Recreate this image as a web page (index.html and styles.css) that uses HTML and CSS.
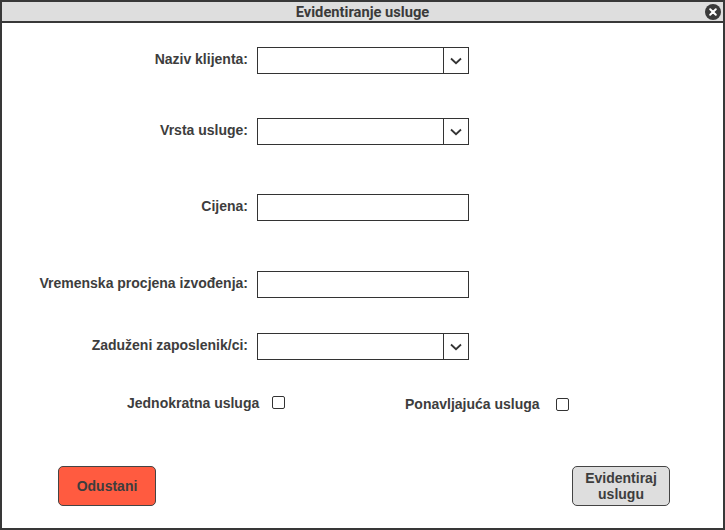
FILE: index.html
```html
<!DOCTYPE html>
<html>
<head>
<meta charset="utf-8">
<link rel="stylesheet" href="styles.css">
</head>
<body>
<div class="window">
  <div class="titlebar">
    <span class="title">Evidentiranje usluge</span>
    <span class="close"><svg width="16" height="16" viewBox="0 0 16 16"><circle cx="8" cy="8" r="8" fill="#3a3a3a"/><path d="M5.2 5.2 L10.8 10.8 M10.8 5.2 L5.2 10.8" stroke="#fff" stroke-width="2" stroke-linecap="round"/></svg></span>
  </div>
  <div class="content">
    <div class="row r1">
      <label class="lbl">Naziv klijenta:</label>
      <div class="field select"><span class="arrow"><svg width="12" height="8" viewBox="0 0 12 8"><path d="M1 1.5 L6 6.2 L11 1.5" fill="none" stroke="#333" stroke-width="1.8"/></svg></span></div>
    </div>
    <div class="row r2">
      <label class="lbl">Vrsta usluge:</label>
      <div class="field select"><span class="arrow"><svg width="12" height="8" viewBox="0 0 12 8"><path d="M1 1.5 L6 6.2 L11 1.5" fill="none" stroke="#333" stroke-width="1.8"/></svg></span></div>
    </div>
    <div class="row r3">
      <label class="lbl">Cijena:</label>
      <div class="field"></div>
    </div>
    <div class="row r4">
      <label class="lbl">Vremenska procjena izvođenja:</label>
      <div class="field"></div>
    </div>
    <div class="row r5">
      <label class="lbl">Zaduženi zaposlenik/ci:</label>
      <div class="field select"><span class="arrow"><svg width="12" height="8" viewBox="0 0 12 8"><path d="M1 1.5 L6 6.2 L11 1.5" fill="none" stroke="#333" stroke-width="1.8"/></svg></span></div>
    </div>
    <div class="checks">
      <div class="check c1"><span>Jednokratna usluga</span><span class="box"></span></div>
      <div class="check c2"><span>Ponavljajuća usluga</span><span class="box"></span></div>
    </div>
    <div class="buttons">
      <button class="btn cancel">Odustani</button>
      <button class="btn submit">Evidentiraj<br>uslugu</button>
    </div>
  </div>
</div>
</body>
</html>
```

FILE: styles.css
```css
* { box-sizing: border-box; }
html, body { margin: 0; padding: 0; background: #fff; }
body { font-family: "Liberation Sans", Arial, sans-serif; color: #3d3d3d; }
.window {
  width: 725px;
  height: 530px;
  border: 2px solid #383838;
  display: flex;
  flex-direction: column;
}
.titlebar {
  height: 21px;
  background: #dedede;
  border-bottom: 2px solid #383838;
  display: flex;
  align-items: center;
  justify-content: center;
  position: relative;
}
.title {
  font-family: Roboto, "Liberation Sans", sans-serif;
  font-weight: bold;
  font-size: 14.7px;
  color: #3a3a3a;
}
.close {
  position: absolute;
  right: 2px;
  top: 2px;
  width: 16px;
  height: 16px;
  display: block;
}
.close svg { display: block; }
.content { flex: 1; display: flex; flex-direction: column; }
.row {
  display: grid;
  grid-template-columns: 248px 212px;
  column-gap: 7px;
  align-items: center;
}
.r1 { margin-top: 24px; }
.r2 { margin-top: 44px; }
.r3 { margin-top: 49px; }
.r4 { margin-top: 50px; }
.r5 { margin-top: 35px; }
.lbl {
  text-align: right;
  font-weight: bold;
  font-size: 14px;
  color: #3d3d3d;
  padding-right: 2px;
  margin-bottom: 3px;
}
.field {
  height: 27px;
  border: 1px solid #333;
  background: #fff;
  display: flex;
  justify-content: flex-end;
}
.arrow {
  width: 25px;
  border-left: 1px solid #333;
  display: flex;
  align-items: center;
  justify-content: center;
}
.arrow svg { display: block; }
.checks {
  display: flex;
  margin-top: 33px;
  padding-left: 125px;
  align-items: center;
}
.check {
  display: flex;
  align-items: center;
  font-weight: bold;
  font-size: 14px;
}
.c1 { width: 278px; }
.c1 .box { margin-left: 13px; }
.c2 { margin-top: 3px; }
.c2 .box { margin-left: 16px; }
.box {
  width: 13px;
  height: 13px;
  border: 1.5px solid #333;
  border-radius: 2px;
  background: #fff;
}
.buttons {
  display: flex;
  justify-content: space-between;
  padding: 0 53px 0 56px;
  margin-top: 54px;
}
.btn {
  width: 98px;
  height: 40px;
  border: 1px solid #444;
  border-radius: 5px;
  font-family: "Liberation Sans", Arial, sans-serif;
  font-weight: bold;
  font-size: 14px;
  color: #3d3d3d;
  line-height: 16px;
  padding: 0;
}
.cancel { background: #ff5b40; }
.submit { background: #dedede; }
```
